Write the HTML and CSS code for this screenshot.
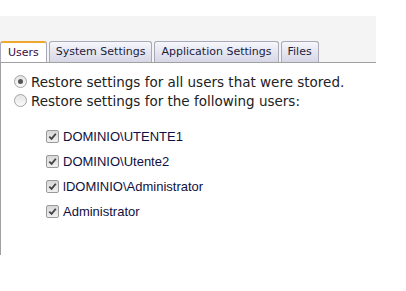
FILE: index.html
```html
<!DOCTYPE html>
<html>
<head>
    <title>Restore Settings</title>
    <link rel="stylesheet" href="styles.css">
</head>
<body>
    <div class="window">
        <div class="tab-bar">
            <div class="tab active">Users</div>
            <div class="tab">System Settings</div>
            <div class="tab">Application Settings</div>
            <div class="tab">Files</div>
        </div>
        <div class="panel">
            <label class="radio-row">
                <span class="radio checked"></span>
                Restore settings for all users that were stored.
            </label>
            <label class="radio-row">
                <span class="radio"></span>
                Restore settings for the following users:
            </label>

            <ul class="user-list">
                <li><span class="check"><svg width="12" height="12" viewBox="0 0 12 12"><path d="M2.5 6.2 L5 8.6 L9.6 3" fill="none" stroke="#444" stroke-width="2"/></svg></span>DOMINIO\UTENTE1</li>
                <li><span class="check"><svg width="12" height="12" viewBox="0 0 12 12"><path d="M2.5 6.2 L5 8.6 L9.6 3" fill="none" stroke="#444" stroke-width="2"/></svg></span>DOMINIO\Utente2</li>
                <li><span class="check"><svg width="12" height="12" viewBox="0 0 12 12"><path d="M2.5 6.2 L5 8.6 L9.6 3" fill="none" stroke="#444" stroke-width="2"/></svg></span>lDOMINIO\Administrator</li>
                <li><span class="check"><svg width="12" height="12" viewBox="0 0 12 12"><path d="M2.5 6.2 L5 8.6 L9.6 3" fill="none" stroke="#444" stroke-width="2"/></svg></span>Administrator</li>
            </ul>
        </div>
    </div>
</body>
</html>
```

FILE: styles.css
```css
body {
    margin: 0;
    background-color: white;
    font-family: "DejaVu Sans", Verdana, sans-serif;
    color: #222;
}
.window {
    width: 376px;
    margin-top: 16px;
}
.tab-bar {
    display: flex;
    gap: 2px;
    padding-top: 25px;
    background-color: #f4f4f4;
}
.tab {
    height: 20px;
    padding: 0 6px;
    font-size: 11px;
    line-height: 20px;
    border: 1px solid #a8a8b8;
    border-bottom: none;
    border-radius: 3px 3px 0 0;
    background: linear-gradient(#f6f6fc, #d6d6e6);
    color: #1c1c3c;
}
.tab.active {
    border-top: 2px solid #f0a830;
    height: 19px;
    padding: 0 7px;
    background: white;
    color: #3a1040;
}
.panel {
    height: 183px;
    border-top: 1px solid #a0a0a0;
    border-left: 1px solid #a0a0a0;
    padding-top: 9px;
    padding-left: 13px;
}
.radio-row {
    display: flex;
    align-items: center;
    gap: 4px;
    font-size: 13.5px;
    height: 19px;
}
.radio {
    width: 11px;
    height: 11px;
    border: 1px solid #a4a4a4;
    border-radius: 50%;
    background: linear-gradient(#e4e4e4, #fafafa);
    position: relative;
}
.radio.checked::after {
    content: "";
    position: absolute;
    left: 3px;
    top: 3px;
    width: 5px;
    height: 5px;
    border-radius: 50%;
    background-color: #555;
}
.user-list {
    list-style: none;
    margin: 14px 0 0 0;
    padding-left: 32px;
    font-family: "Liberation Sans", Arial, sans-serif;
    font-size: 13px;
    color: #101040;
}
.user-list li {
    display: flex;
    align-items: center;
    gap: 4px;
    height: 25px;
}
.check {
    display: flex;
    width: 11px;
    height: 11px;
    border: 1px solid #9a9a9a;
    border-radius: 2px;
    background: linear-gradient(#d8d8d8, #f0f0f0);
}
.check svg {
    width: 11px;
    height: 11px;
}
```
